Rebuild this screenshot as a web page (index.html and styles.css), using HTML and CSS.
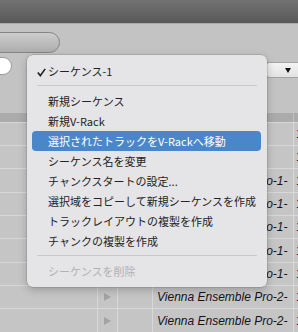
FILE: index.html
```html
<!DOCTYPE html>
<html lang="ja">
<head>
<meta charset="utf-8">
<title>Sequence menu</title>
<link rel="stylesheet" href="styles.css">
</head>
<body>
<div class="window">
  <div class="titlebar"></div>
  <div class="toolbar">
    <div class="pill"></div>
    <div class="toolrow">
      <div class="search-end"></div>
      <div class="popup"><span class="popup-arrow"></span></div>
    </div>
  </div>
  <div class="table">
    <div class="thead">
      <div class="cell"></div><div class="cell"></div><div class="cell"></div><div class="cell"></div><div class="cell last">ト</div>
    </div>
    <div class="row"><div class="cell"></div><div class="cell"></div><div class="cell"></div><div class="cell"></div><div class="cell last">1</div></div>
    <div class="row"><div class="cell"></div><div class="cell"></div><div class="cell"></div><div class="cell"></div><div class="cell last">1</div></div>
    <div class="row"><div class="cell"></div><div class="cell"><span class="play"></span></div><div class="cell"></div><div class="cell name">Vienna Ensemble Pro-1-</div><div class="cell last">1</div></div>
    <div class="row"><div class="cell"></div><div class="cell"><span class="play"></span></div><div class="cell"></div><div class="cell name">Vienna Ensemble Pro-1-</div><div class="cell last">1</div></div>
    <div class="row"><div class="cell"></div><div class="cell"><span class="play"></span></div><div class="cell"></div><div class="cell name">Vienna Ensemble Pro-1-</div><div class="cell last">1</div></div>
    <div class="row"><div class="cell"></div><div class="cell"><span class="play"></span></div><div class="cell"></div><div class="cell name">Vienna Ensemble Pro-1-</div><div class="cell last">1</div></div>
    <div class="row"><div class="cell"></div><div class="cell"><span class="play"></span></div><div class="cell"></div><div class="cell name">Vienna Ensemble Pro-1-</div><div class="cell last">1</div></div>
    <div class="row"><div class="cell"></div><div class="cell"><span class="play"></span></div><div class="cell"></div><div class="cell name">Vienna Ensemble Pro-2-</div><div class="cell last">1</div></div>
    <div class="row"><div class="cell"></div><div class="cell"><span class="play"></span></div><div class="cell"></div><div class="cell name">Vienna Ensemble Pro-2-</div><div class="cell last">1</div></div>
  </div>

  <div class="menu">
    <div class="item"><svg class="check" width="9" height="9" viewBox="0 0 9 9"><path d="M0.8 4.6 L3.3 7.6 L8.2 0.9" fill="none" stroke="#1e1e1e" stroke-width="1.6"/></svg>シーケンス-1</div>
    <div class="sep"></div>
    <div class="item">新規シーケンス</div>
    <div class="item">新規V-Rack</div>
    <div class="item active">選択されたトラックをV-Rackへ移動</div>
    <div class="item">シーケンス名を変更</div>
    <div class="item">チャンクスタートの設定...</div>
    <div class="item">選択域をコピーして新規シーケンスを作成</div>
    <div class="item">トラックレイアウトの複製を作成</div>
    <div class="item">チャンクの複製を作成</div>
    <div class="sep"></div>
    <div class="item disabled">シーケンスを削除</div>
  </div>
</div>
</body>
</html>
```
FILE: styles.css
```css
html, body {
  margin: 0;
  padding: 0;
}
body {
  width: 298px;
  height: 332px;
  overflow: hidden;
  background: #c2c2c2;
  font-family: "Noto Sans CJK JP", "Noto Sans", sans-serif;
}
.window {
  position: relative;
  width: 298px;
  height: 332px;
  overflow: hidden;
}
.titlebar {
  height: 23px;
  background: linear-gradient(#727272, #585858);
  border-bottom: 1px solid #a9a9a9;
}
.toolbar {
  height: 89px;
  box-sizing: border-box;
  padding-top: 8px;
  background: #c3c3c3;
}
.pill {
  margin-left: -12px;
  width: 72px;
  height: 21px;
  box-sizing: border-box;
  border: 1px solid #858585;
  border-radius: 11px;
  background: linear-gradient(#cdcdcd, #adadad);
}
.toolrow {
  margin-top: 4px;
  display: flex;
  justify-content: space-between;
  align-items: flex-start;
}
.search-end {
  margin-left: -20px;
  width: 32px;
  height: 18px;
  box-sizing: border-box;
  border: 1px solid #9c9c9c;
  border-radius: 9px;
  background: #ffffff;
}
.popup {
  margin-top: 5px;
  margin-right: -12px;
  width: 44px;
  height: 16px;
  box-sizing: border-box;
  border: 1px solid #a4a4a4;
  border-radius: 3px;
  background: linear-gradient(#f4f4f4, #e2e2e2);
  display: flex;
  align-items: center;
}
.popup-arrow {
  margin-left: 18px;
  width: 0;
  height: 0;
  border-left: 3.5px solid transparent;
  border-right: 3.5px solid transparent;
  border-top: 5px solid #111;
}
.table {
  font-family: "Liberation Sans", Arial, sans-serif;
}
.thead, .row {
  display: grid;
  grid-template-columns: 97px 20px 35px 141px 1fr;
}
.thead {
  height: 9px;
  background: #ababab;
  font-size: 10px;
  line-height: 9px;
  overflow: hidden;
}
.row {
  height: 23px;
  box-sizing: border-box;
  border-top: 1px solid #d8d8d8;
  background: #c5c5c5;
}
.row:nth-child(3n+1) {
  height: 24px;
}
.cell {
  min-width: 0;
  overflow: hidden;
  white-space: nowrap;
  display: flex;
  align-items: center;
}
.cell + .cell {
  border-left: 1px solid #d8d8d8;
}
.thead .cell + .cell {
  border-left-color: #c2c2c2;
}
.name {
  padding-left: 4px;
  font-style: italic;
  font-size: 12px;
  color: #141414;
}
.last {
  padding-left: 2px;
  font-size: 12px;
  color: #141414;
}
.play {
  margin-left: 6px;
  width: 0;
  height: 0;
  border-top: 4px solid transparent;
  border-bottom: 4px solid transparent;
  border-left: 7px solid #a3a3a3;
}
.menu {
  position: absolute;
  left: 27px;
  top: 55px;
  width: 240px;
  box-sizing: border-box;
  padding: 6px 0 6px;
  background: #e5e4e7;
  border-radius: 6px;
  box-shadow: 0 0 0 0.5px rgba(0, 0, 0, 0.18), 0 3px 8px rgba(0, 0, 0, 0.22);
  font-size: 11px;
  color: #232323;
}
.item {
  height: 20px;
  line-height: 20px;
  padding-left: 21px;
  white-space: nowrap;
}
.check {
  margin-left: -11px;
  margin-right: 2px;
  vertical-align: -1px;
}
.item.active {
  margin: 0 6px 0 5px;
  padding-left: 16px;
  border-radius: 4px;
  background: #4a87ca;
  color: #ffffff;
}
.item.disabled {
  color: #b2b1b4;
}
.sep {
  height: 1px;
  margin: 4px 10px 5px;
  background: #c9c8cb;
}
```
